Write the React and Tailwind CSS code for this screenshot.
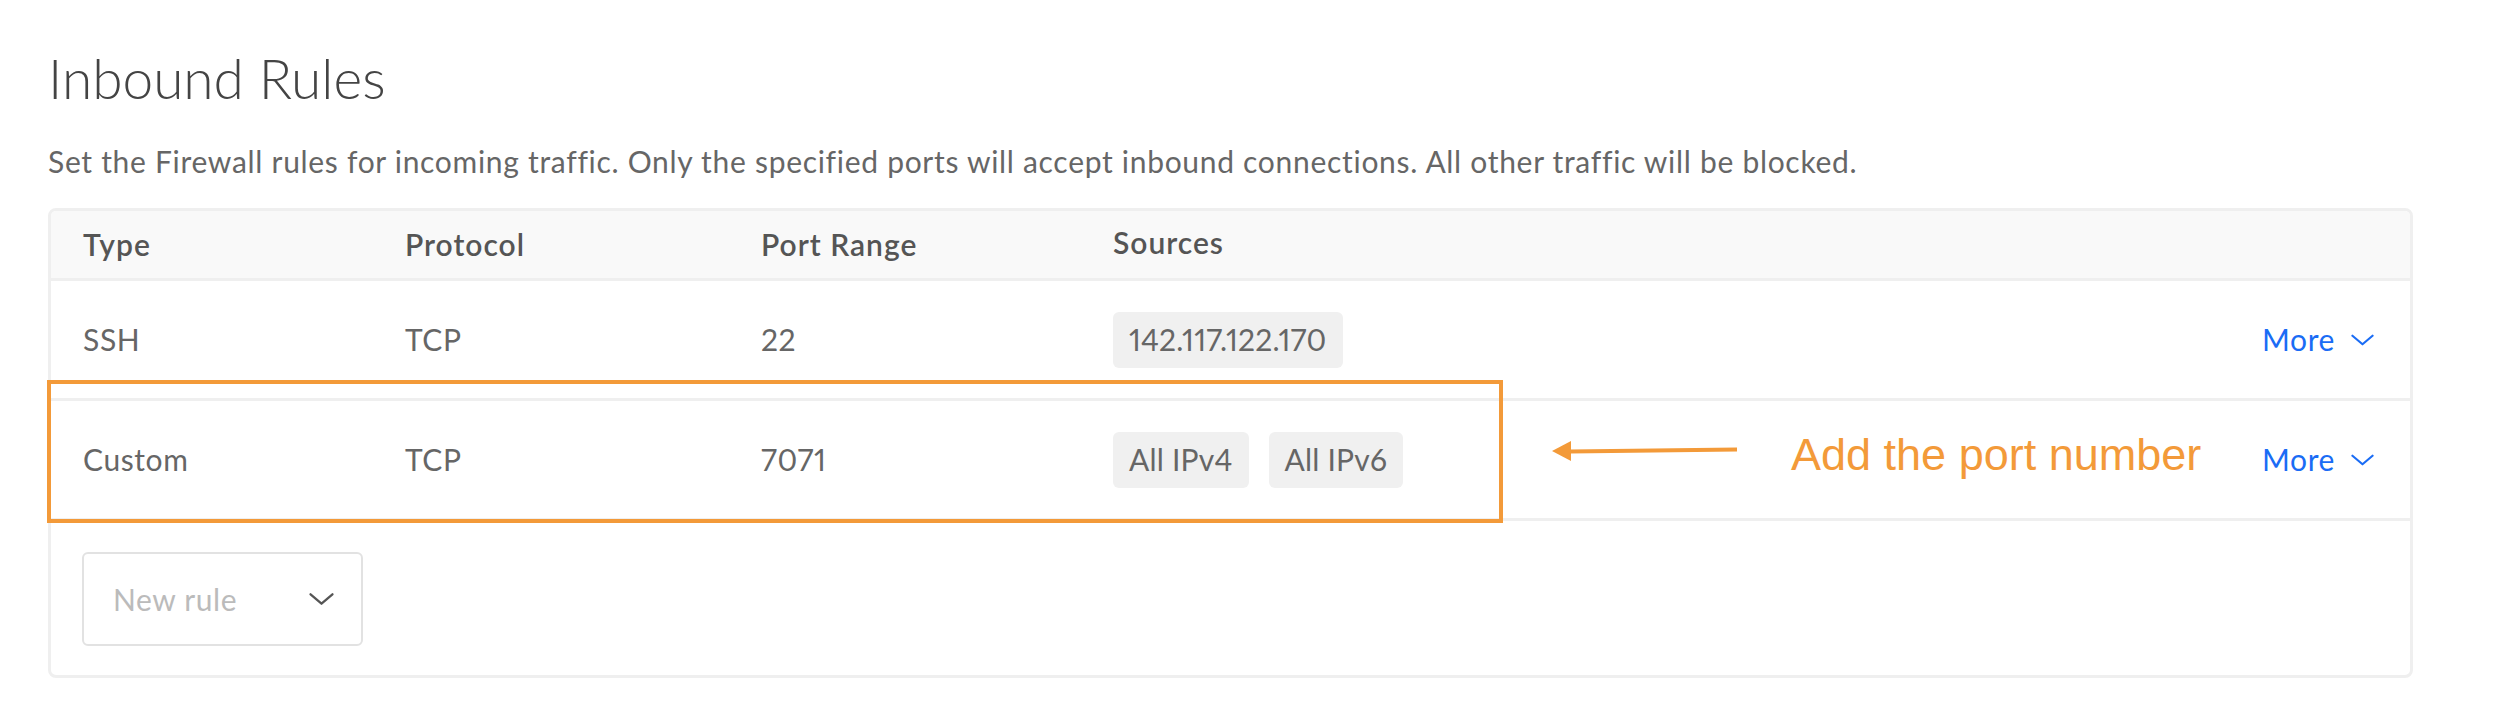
import React from 'react';

const rules = [
    { type: 'SSH', protocol: 'TCP', ports: '22', sources: ['142.117.122.170'] },
    { type: 'Custom', protocol: 'TCP', ports: '7071', sources: ['All IPv4', 'All IPv6'] },
];

const Chevron = ({ className }) => (
    <svg viewBox="0 0 24 12" className={className} fill="none" stroke="currentColor" strokeWidth="2.2" strokeLinecap="round" strokeLinejoin="round">
        <polyline points="1.5,1.5 12,10.5 22.5,1.5" />
    </svg>
);

export default function App() {
    return (
        <div className="relative w-[2494px] h-[724px] bg-white pl-[48px] pr-[81px] pt-[45px] font-['Lato',sans-serif] proportional-nums">
            <h1 className="text-[55px] leading-[1.2] font-light text-[#444]">Inbound Rules</h1>
            <p className="mt-[32px] text-[30px] leading-[1.2] tracking-[0.7px] text-[#666]">
                Set the Firewall rules for incoming traffic. Only the specified ports will accept inbound connections. All other traffic will be blocked.
            </p>

            <div className="mt-[29px] rounded-[8px] border-[3px] border-[#efefef] overflow-hidden">
                {/* Header */}
                <div className="grid grid-cols-[322px_356px_352px_1fr] items-center h-[70px] pl-[32px] pr-[36px] bg-[#f9f9f9] border-b-[3px] border-[#efefef] text-[30px] tracking-[1px] font-semibold text-[#555]">
                    <span>Type</span>
                    <span>Protocol</span>
                    <span>Port Range</span>
                    <span className="-mt-[5px]">Sources</span>
                </div>

                {/* Rows */}
                {rules.map(rule => (
                    <div key={rule.type} className="grid grid-cols-[322px_356px_352px_1fr_auto] items-center h-[120px] pl-[32px] pr-[36px] border-b-[3px] border-[#efefef] text-[30px] tracking-[0.6px] text-[#666]">
                        <span>{rule.type}</span>
                        <span>{rule.protocol}</span>
                        <span>{rule.ports}</span>
                        <div className="flex gap-[20px]">
                            {rule.sources.map(s => (
                                <span key={s} className="h-[56px] flex items-center px-[16px] rounded-[6px] bg-[#f0f0f0] tracking-[0.2px]">{s}</span>
                            ))}
                        </div>
                        <button className="flex items-center gap-[16px] text-[#1a6cf5] tracking-[0.6px]">
                            More
                            <Chevron className="w-[23px] h-[12px]" />
                        </button>
                    </div>
                ))}

                {/* New rule */}
                <div className="pt-[31px] pb-[29px] pl-[31px]">
                    <div className="w-[281px] h-[94px] flex items-center justify-between pl-[29px] pr-[27px] border-[2px] border-[#e2e2e2] rounded-[6px] text-[30px] tracking-[0.6px] text-[#bbb]">
                        <span>New rule</span>
                        <Chevron className="w-[25px] h-[14px] text-[#555]" />
                    </div>
                </div>
            </div>

            {/* Annotation */}
            <div className="absolute left-[47px] top-[380px] w-[1456px] h-[143px] border-[4px] border-[#f39a39]" />
            <svg className="absolute left-[1550px] top-[440px] w-[190px] h-[24px]" viewBox="0 0 190 24">
                <polygon points="2,11 21,1 21,21" fill="#f39a39" />
                <line x1="20" y1="11.5" x2="187" y2="9.5" stroke="#f39a39" strokeWidth="4" />
            </svg>
            <span className="absolute left-[1791px] top-[432px] text-[45px] leading-none text-[#f39a39] font-['Liberation_Sans',Arial,sans-serif]">
                Add the port number
            </span>
        </div>
    );
}
